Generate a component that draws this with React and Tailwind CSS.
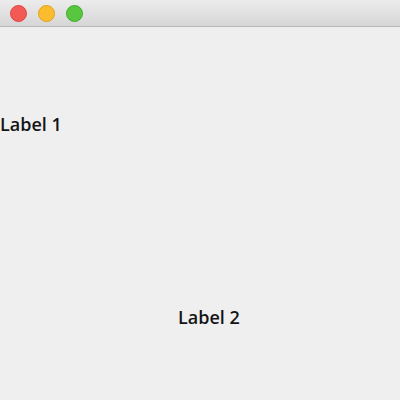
export default function App() {
  return (
    <div className="w-[400px] h-[400px] bg-[#efefef] flex flex-col overflow-hidden" style={{ fontFamily: '"Open Sans", sans-serif' }}>
      <div className="h-[27px] shrink-0 bg-gradient-to-b from-[#ececec] to-[#d6d6d6] border-b border-[#b9b9b9] flex items-center pl-[10px] gap-[11px]">
        <div className="w-[17px] h-[17px] rounded-full bg-[#f25a56] border border-[#e0443e]" />
        <div className="w-[17px] h-[17px] rounded-full bg-[#fbbd2e] border border-[#e1a116]" />
        <div className="w-[17px] h-[17px] rounded-full bg-[#58c73f] border border-[#3fac2a]" />
      </div>
      <div className="flex flex-col text-[18px] font-semibold text-[#141414] leading-none">
        <div className="mt-[88px] ml-0">Label 1</div>
        <div className="mt-[175px] ml-[178px]">Label 2</div>
      </div>
    </div>
  );
}
